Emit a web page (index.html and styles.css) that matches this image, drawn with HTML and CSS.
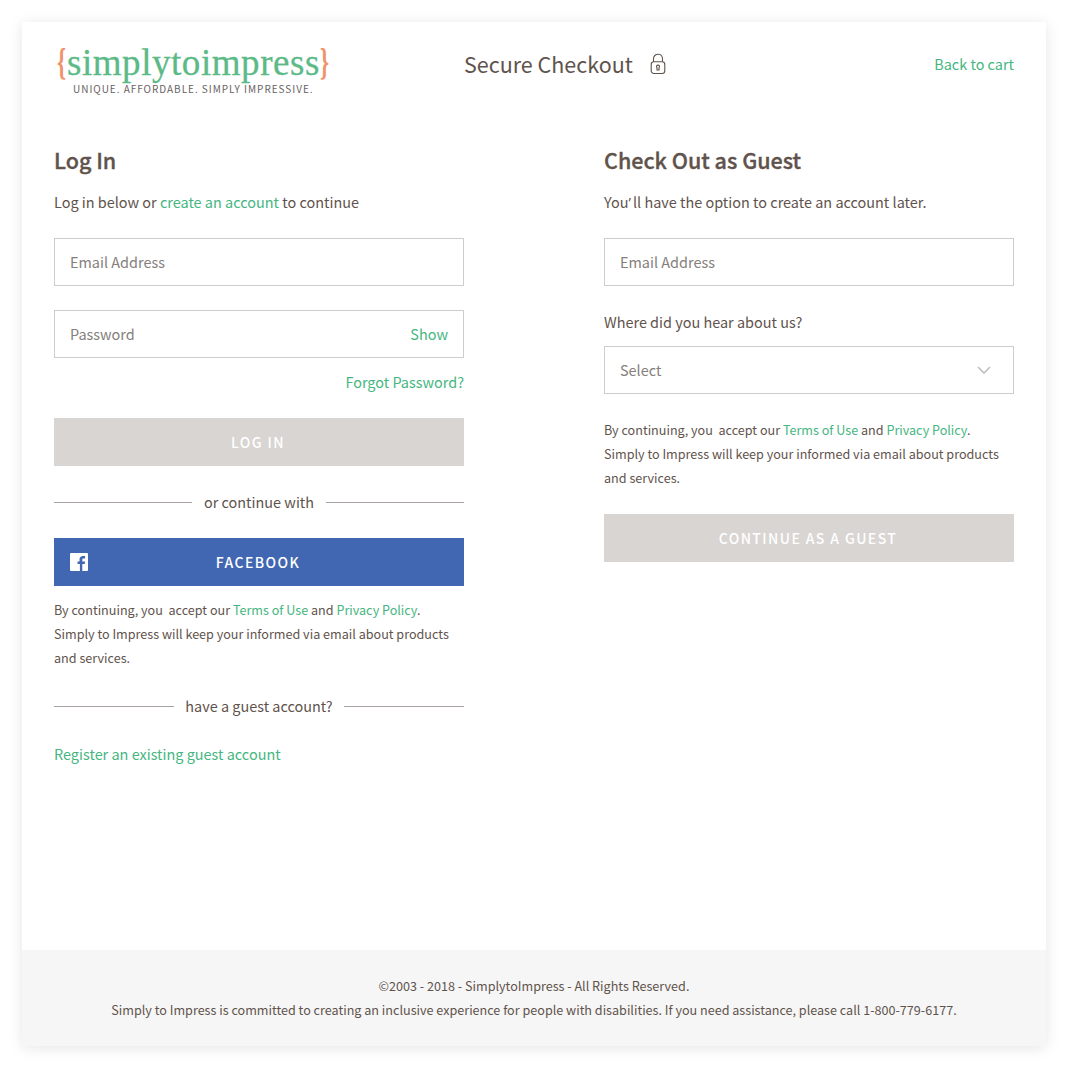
FILE: index.html
```html
<!DOCTYPE html>
<html lang="en">
<head>
    <meta charset="UTF-8">
    <meta name="viewport" content="width=device-width, initial-scale=1.0">
    <title>Secure Checkout</title>
    <link rel="stylesheet" href="styles.css">
</head>
<body>

<div class="card">
    <header class="top">
        <a class="logo" href="#">
            <span class="logo-name"><span class="brace">{</span>simplytoimpress<span class="brace">}</span></span>
            <span class="logo-tag">UNIQUE. AFFORDABLE. SIMPLY IMPRESSIVE.</span>
        </a>
        <div class="secure">
            <span>Secure Checkout</span>
            <svg class="lock" width="16" height="22" viewBox="0 0 17 24" fill="none" stroke="#5f534c" stroke-width="1.2">
                <path d="M3.6 9.5V6.2a4.9 4.9 0 0 1 9.8 0v3.3"/>
                <rect x="1.1" y="9.5" width="14.8" height="12.9" rx="3"/>
                <path d="M8.5 13.2a1.6 1.6 0 0 1 1.1 2.8v2.6H7.4V16a1.6 1.6 0 0 1 1.1-2.8z"/>
            </svg>
        </div>
        <a class="back" href="#">Back to cart</a>
    </header>

    <main class="columns">
        <section class="col">
            <h2>Log In</h2>
            <p class="sub">Log in below or <a href="#">create an account</a> to continue</p>
            <input class="field" type="text" placeholder="Email Address">
            <div class="password">
                <input class="field" type="password" placeholder="Password">
                <a class="show" href="#">Show</a>
            </div>
            <div class="forgot"><a href="#">Forgot Password?</a></div>
            <button class="btn btn-off">LOG IN</button>
            <div class="divider"><span>or continue with</span></div>
            <button class="btn btn-fb">
                <svg class="fb-icon" width="18" height="18" viewBox="0 0 18 18">
                    <path fill="#fff" d="M1 0h16a1 1 0 0 1 1 1v16a1 1 0 0 1-1 1h-4.700v-6.900h2.400l.4-2.700h-2.800V6.700c0-.8.200-1.300 1.400-1.300h1.400V3c-.3 0-1.100-.1-2.100-.1-2.100 0-3.500 1.300-3.500 3.600v2H7.500v2.600h2.400V18H1a1 1 0 0 1-1-1V1a1 1 0 0 1 1-1z"/>
                </svg>
                FACEBOOK
            </button>
            <p class="legal">By continuing, you&nbsp; accept our <a href="#">Terms of Use</a> and <a href="#">Privacy Policy</a>.<br>Simply to Impress will keep your informed via email about products and services.</p>
            <div class="divider divider-guest"><span>have a guest account?</span></div>
            <p class="register"><a href="#">Register an existing guest account</a></p>
        </section>

        <section class="col">
            <h2>Check Out as Guest</h2>
            <p class="sub">You<span class="apos">’</span>ll have the option to create an account later.</p>
            <input class="field" type="text" placeholder="Email Address">
            <label class="hear" for="hear">Where did you hear about us?</label>
            <div class="select-wrap">
                <select class="field" id="hear">
                    <option>Select</option>
                </select>
                <svg class="chevron" width="14" height="9" viewBox="0 0 14 9" fill="none" stroke="#c4c1be" stroke-width="1.700">
                    <path d="M1 1l6 6 6-6"/>
                </svg>
            </div>
            <p class="legal legal-guest">By continuing, you&nbsp; accept our <a href="#">Terms of Use</a> and <a href="#">Privacy Policy</a>.<br>Simply to Impress will keep your informed via email about products and services.</p>
            <button class="btn btn-off btn-guest">CONTINUE AS A GUEST</button>
        </section>
    </main>

    <footer class="foot">
        <p>©2003 - 2018 - SimplytoImpress - All Rights Reserved.</p>
        <p>Simply to Impress is committed to creating an inclusive experience for people with disabilities. If you need assistance, please call 1-800-779-6177.</p>
    </footer>
</div>

</body>
</html>
```

FILE: styles.css
```css
* {
    box-sizing: border-box;
}
body {
    margin: 0;
    padding: 22px;
    height: 1068px;
    background-color: #fff;
    color: #5f534c;
    font-family: "Noto Sans CJK SC", "Noto Sans", sans-serif;
    font-size: 14.450px;
    line-height: 24px;
    overflow: hidden;
}
a {
    color: #45b681;
    text-decoration: none;
}
p {
    margin: 0;
}
.card {
    height: 1024px;
    display: flex;
    flex-direction: column;
    background-color: #fff;
    box-shadow: 0 2px 14px rgba(0, 0, 0, 0.1);
}
.top {
    height: 125px;
    padding: 22px 32px 0;
    display: grid;
    grid-template-columns: 410px 1fr auto;
    align-items: start;
}
.logo {
    display: flex;
    flex-direction: column;
    padding-left: 3px;
}
.logo-name {
    font-family: "Liberation Serif", serif;
    font-size: 37px;
    line-height: 38px;
    letter-spacing: 0.55px;
    color: #5cba87;
    -webkit-text-stroke: 0.3px #5cba87;
    white-space: nowrap;
}
.brace {
    display: inline-block;
    width: 10px;
    transform: scaleX(0.62);
    transform-origin: left;
    font-weight: bold;
    color: #f0936a;
    -webkit-text-stroke: 0;
}
.logo-tag {
    margin-left: 16px;
    font-size: 10px;
    line-height: 14px;
    letter-spacing: 0.97px;
    color: #67625f;
    white-space: nowrap;
}
.secure {
    display: flex;
    align-items: center;
    gap: 17px;
    height: 40px;
    font-size: 21.500px;
}
.lock {
    display: block;
}
.back {
    height: 40px;
    line-height: 40px;
}
.columns {
    flex: 1;
    padding: 0 32px;
    display: flex;
    gap: 140px;
}
.col {
    width: 410px;
    display: flex;
    flex-direction: column;
}
h2 {
    margin: 0 0 17px;
    font-size: 21.500px;
    line-height: 26px;
    font-weight: 500;
    -webkit-text-stroke: 0.35px #5f534c;
}
.sub {
    margin-bottom: 24px;
}
.apos {
    font-family: "Open Sans", sans-serif;
    line-height: 0;
    letter-spacing: 2px;
}
.field {
    display: block;
    width: 100%;
    height: 48px;
    padding: 0 15px 2px;
    background-color: #fff;
    border: 1px solid #cfcccb;
    border-radius: 0;
    font-family: inherit;
    font-size: 14.450px;
    color: #85807c;
    outline: none;
    appearance: none;
}
.field::placeholder {
    color: #85807c;
    opacity: 1;
}
.password {
    position: relative;
    margin-top: 24px;
}
.show {
    position: absolute;
    top: 12px;
    right: 16px;
}
.forgot {
    margin-top: 12px;
    text-align: right;
}
.btn {
    display: block;
    position: relative;
    width: 100%;
    height: 48px;
    padding: 0 2px 1px 0;
    border: none;
    color: #fff;
    font-family: inherit;
    font-size: 14px;
    font-weight: 500;
    letter-spacing: 1.4px;
    text-align: center;
}
.btn-off {
    margin-top: 24px;
    background-color: #d9d5d2;
}
.btn-fb {
    background-color: #4267b2;
}
.fb-icon {
    position: absolute;
    top: 15px;
    left: 16px;
}
.divider {
    display: flex;
    align-items: center;
    gap: 12px;
    margin: 24px 0;
}
.divider::before,
.divider::after {
    content: "";
    flex: 1;
    height: 1px;
    background-color: #a8a3a0;
}
.divider-guest {
    gap: 11px;
    margin-bottom: 24px;
}
.legal {
    margin-top: 12px;
    font-size: 12.600px;
}
.legal-guest {
    margin-top: 24px;
}
.register {
    margin: 0;
}
.hear {
    margin-top: 24px;
    margin-bottom: 12px;
}
.select-wrap {
    position: relative;
}
.chevron {
    position: absolute;
    top: 20px;
    right: 23px;
}
.foot {
    height: 96px;
    padding: 24px 0;
    background-color: #f6f6f6;
    font-size: 12.600px;
    text-align: center;
}
```
